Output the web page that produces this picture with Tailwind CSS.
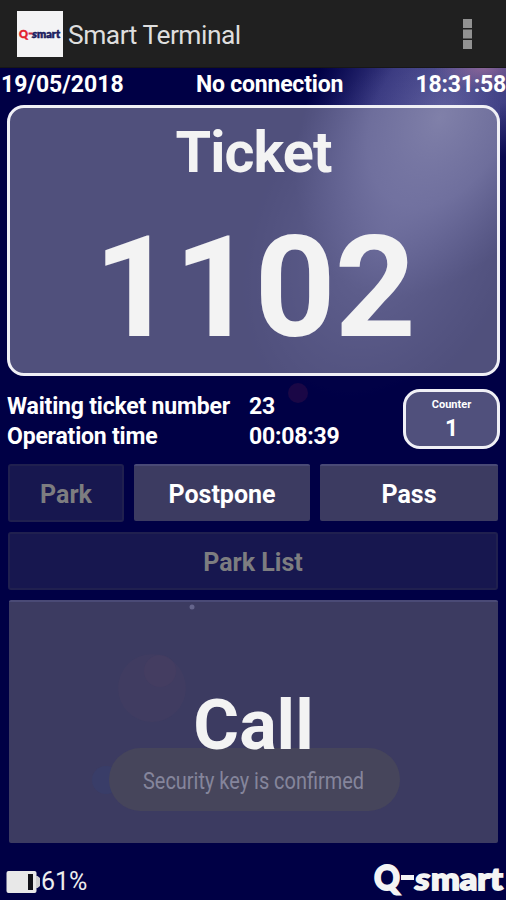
<!DOCTYPE html>
<html lang="en">

<head>
    <meta charset="UTF-8">
    <meta name="viewport" content="width=device-width, initial-scale=1.0">
    <title>Smart Terminal</title>
    <script src="https://cdn.jsdelivr.net/npm/@tailwindcss/browser@4"></script>
</head>

<body class="bg-[#000045]">
    <div class="flex flex-col w-[506px] h-[900px] overflow-hidden font-['Roboto',sans-serif] text-white">
        <!-- action bar -->
        <header class="flex items-center shrink-0 h-[68px] pl-[17px] pr-[34px] bg-[#202020] border-b border-[#171717]">
            <div class="w-[46px] h-[46px] bg-[#f3f3f5]">
                <svg width="46" height="46" viewBox="0 0 46 46" font-family="Lato, sans-serif" font-weight="900">
                    <text x="2" y="27" font-size="12" fill="#e3202b" stroke="#e3202b" stroke-width="0.5" textLength="9" lengthAdjust="spacingAndGlyphs">Q</text>
                    <rect x="11.500" y="21.500" width="4" height="2" fill="#c22c3c" />
                    <text x="15" y="26.500" font-size="10.500" fill="#1b2060" stroke="#1b2060" stroke-width="0.6" font-style="italic" textLength="5" lengthAdjust="spacingAndGlyphs">s</text>
                    <text x="20" y="26.500" font-size="10.500" fill="#1b2060" stroke="#1b2060" stroke-width="0.6" textLength="23" lengthAdjust="spacingAndGlyphs">mart</text>
                </svg>
            </div>
            <h1 class="ml-[5px] mt-[3px] text-[26.4px] leading-8 tracking-[-0.5px] text-[#dedede] whitespace-nowrap">Smart Terminal</h1>
            <svg class="ml-auto" width="9" height="30" fill="#929292">
                <rect x="0" y="0" width="9" height="9" />
                <rect x="0" y="10.5" width="9" height="9" />
                <rect x="0" y="21" width="9" height="9" />
            </svg>
        </header>

        <main class="relative flex flex-col grow">
            <!-- wallpaper -->
            <svg class="absolute inset-0 -z-10" width="506" height="832">
                <defs>
                    <radialGradient id="glow" cx="0.5" cy="0.5" r="0.5">
                        <stop offset="0" stop-color="#7878b0" stop-opacity="0.85" />
                        <stop offset="0.5" stop-color="#5c5ca2" stop-opacity="0.65" />
                        <stop offset="1" stop-color="#3c3c90" stop-opacity="0" />
                    </radialGradient>
                    <radialGradient id="haze" cx="0.5" cy="0.5" r="0.5">
                        <stop offset="0" stop-color="#5555a0" stop-opacity="0.5" />
                        <stop offset="1" stop-color="#3c3c90" stop-opacity="0" />
                    </radialGradient>
                    <radialGradient id="pink" cx="0.5" cy="0.5" r="0.5">
                        <stop offset="0" stop-color="#b478a0" stop-opacity="0.6" />
                        <stop offset="1" stop-color="#b478a0" stop-opacity="0" />
                    </radialGradient>
                    <linearGradient id="edge" x1="0" y1="0" x2="0" y2="1">
                        <stop offset="0" stop-color="#000045" stop-opacity="0" />
                        <stop offset="0.2" stop-color="#000045" stop-opacity="0.8" />
                        <stop offset="1" stop-color="#000045" stop-opacity="0.8" />
                    </linearGradient>
                </defs>
                <ellipse cx="440" cy="50" rx="130" ry="190" fill="url(#glow)" transform="rotate(28 440 50)" />
                <ellipse cx="385" cy="170" rx="130" ry="190" fill="url(#haze)" transform="rotate(25 385 170)" />
                <ellipse cx="484" cy="0" rx="50" ry="22" fill="url(#pink)" />
                <!-- the glow stays inside the ticket card -->
                <rect x="500" y="34" width="6" height="274" fill="url(#edge)" />
                <rect x="0" y="308" width="506" height="90" fill="#000045" fill-opacity="0.8" />
                <circle cx="298" cy="325" r="10" fill="#3a1048" fill-opacity="0.45" />
            </svg>

            <div class="grid grid-cols-3 items-center h-[33px] text-[23px] leading-7 font-bold whitespace-nowrap">
                <span class="pl-px">19/05/2018</span>
                <span class="justify-self-center ml-[33px] tracking-[-0.2px]">No connection</span>
                <span class="justify-self-end tracking-[-0.2px]">18:31:58</span>
            </div>

            <section class="flex flex-col items-center h-[271px] mt-[4px] ml-[7px] mr-[6px] border-3 border-[#f0f0f6] rounded-[17px] bg-[#a0a0b4]/50 text-[#f3f3f3] font-bold">
                <h2 class="mt-[13px] text-[57.5px] leading-[64px] tracking-[-0.9px]">Ticket</h2>
                <div class="mt-[31px] ml-[2px] text-[141.5px] leading-[144px] tracking-[-0.8px]">1102</div>
            </section>

            <section class="flex justify-between mt-[13px] pl-[7px] pr-[6px]">
                <div class="grid grid-cols-[242px_auto] pt-[3px] h-[62px] text-[23px] leading-[30px] tracking-[-0.2px] font-bold whitespace-nowrap">
                    <span>Waiting ticket number</span><span>23</span>
                    <span>Operation time</span><span>00:08:39</span>
                </div>
                <div class="flex flex-col items-center w-[97px] h-[60px] border-3 border-[#f0f0f6] rounded-[17px] bg-[#a0a0b4]/50 font-bold">
                    <span class="mt-[7px] text-[11px] leading-[12px]">Counter</span>
                    <span class="mt-[5px] text-[23px] leading-[26px]">1</span>
                </div>
            </section>

            <section class="flex flex-col gap-[10px] mt-[13px] pl-[8px] pr-[8px] text-[25px] font-bold">
                <div class="grid grid-cols-[116px_176px_178px] gap-[10px] h-[58px]">
                    <button class="rounded-[3px] border-2 border-[#20204f] bg-[#17174f] text-[#7d7d80] pt-[3px]">Park</button>
                    <button class="rounded-[2px] border-t-2 border-[#4a4a76] bg-[#3c3b61] mb-px pt-[3px]">Postpone</button>
                    <button class="rounded-[2px] border-t-2 border-[#4a4a76] bg-[#3c3b61] mb-px pt-[3px]">Pass</button>
                </div>
                <button class="h-[58px] rounded-[3px] border-2 border-[#20204f] bg-[#17174f] text-[#7d7d80] pt-[3px]">Park List</button>
                <button class="relative h-[243px] ml-px rounded-[2px] border-t-2 border-[#4a4a76] bg-[#3c3b61] text-[#f3f3f3]">
                    <!-- lens flare spots showing through -->
                    <svg class="absolute left-0 top-0" width="489" height="241">
                        <circle cx="183" cy="5" r="2.5" fill="#65658c" />
                        <circle cx="143" cy="86" r="34" fill="#463e62" fill-opacity="0.4" />
                        <circle cx="151" cy="69" r="16" fill="#4c3f61" fill-opacity="0.35" />
                        <circle cx="97" cy="178" r="14" fill="#364170" fill-opacity="0.45" />
                    </svg>
                    <!-- toast -->
                    <svg class="absolute left-[100px] top-[146px]" width="291" height="63">
                        <rect width="291" height="63" rx="31.5" fill="#46455b" />
                        <text x="34" y="41" font-size="23.500" font-weight="400" fill="#85859c" textLength="221" lengthAdjust="spacingAndGlyphs">Security key is confirmed</text>
                    </svg>
                    <span class="relative top-[2px] text-[70px] leading-[80px]">Call</span>
                </button>
            </section>

            <footer class="flex items-center h-[57px] pl-[6px] pt-[20px]">
                <svg width="34" height="24">
                    <rect x="0.5" y="1" width="30" height="22" rx="2" fill="#e8e8e8" />
                    <rect x="22" y="4" width="5" height="16" fill="#111118" />
                    <path d="M30 6h1.500l2.500 2v8l-2.500 2H30z" fill="#d0d0d0" />
                </svg>
                <span class="ml-[1px] text-[25px] leading-7 text-[#ededed]">61%</span>
                <svg class="ml-auto mt-[-5px]" width="134" height="46" fill="#f4f4f4" stroke="#f4f4f4" font-family="Lato, sans-serif" font-weight="900">
                    <text x="2" y="34" font-size="35" stroke-width="1.800" textLength="26" lengthAdjust="spacingAndGlyphs">Q</text>
                    <rect x="29" y="19" width="13" height="5" stroke="none" />
                    <text x="43" y="34" font-size="31" stroke-width="1.500" font-style="italic" textLength="15" lengthAdjust="spacingAndGlyphs">s</text>
                    <text x="59" y="34" font-size="31" stroke-width="1.800" textLength="72" lengthAdjust="spacingAndGlyphs">mart</text>
                </svg>
            </footer>
        </main>
    </div>
</body>

</html>
